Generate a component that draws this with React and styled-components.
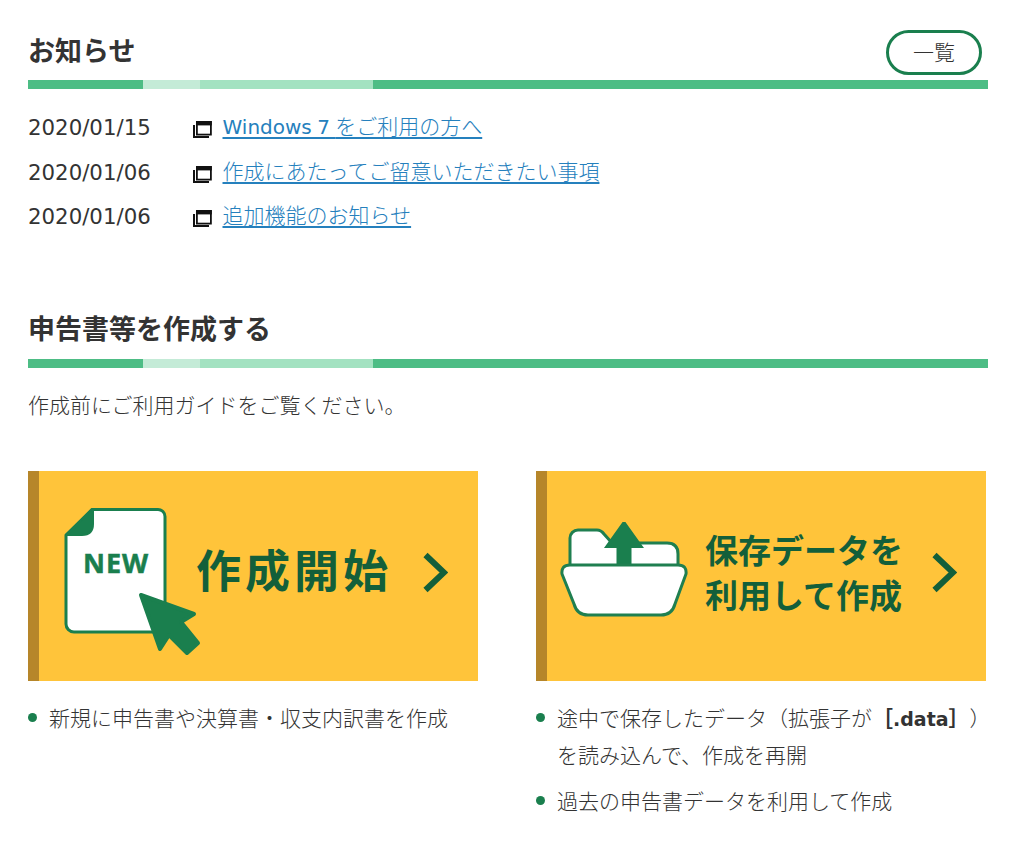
import React from "react";
import styled, { createGlobalStyle } from "styled-components";

const Global = createGlobalStyle`
  html, body { margin: 0; padding: 0; background: #fff; }
  body { font-family: "Noto Sans CJK JP", sans-serif; color: #333; }
`;

const Page = styled.div`
  width: 960px;
  padding: 29px 0 0 28px;
  box-sizing: content-box;
`;

const HeadRow = styled.div`
  display: flex;
  align-items: center;
  justify-content: space-between;
  height: 46px;
  padding-right: 6px;
`;

const Title = styled.h2`
  margin: -4px 0 0;
  font-size: 27px;
  line-height: 42px;
  font-weight: 700;
  color: #333;
`;

const ListButton = styled.a`
  display: flex;
  align-items: center;
  justify-content: center;
  box-sizing: border-box;
  width: 96px;
  height: 45px;
  padding-bottom: 2px;
  border: 3px solid #1a7f4e;
  border-radius: 23px;
  font-size: 21px;
  font-weight: 300;
  color: #333;
`;

const Bar = styled.div`
  display: flex;
  height: 9px;
  margin-top: 5px;
`;

const Seg = styled.span`
  display: block;
  width: ${(p) => p.$w};
  flex: ${(p) => (p.$w ? "none" : "1")};
  background: ${(p) => p.$c};
`;

const Rule = () => (
  <Bar>
    <Seg $w="115px" $c="#4dbd85" />
    <Seg $w="57px" $c="#c4ebd7" />
    <Seg $w="173px" $c="#a3e2c1" />
    <Seg $c="#4dbd85" />
  </Bar>
);

const News = styled.ul`
  list-style: none;
  margin: 16px 0 0;
  padding: 0;
`;

const NewsRow = styled.li`
  display: flex;
  align-items: center;
  height: 44.5px;
  font-size: 21px;
  font-weight: 300;
`;

const NewsDate = styled.span`
  width: 165px;
  flex: none;
  margin-top: 1px;
  font-family: "DejaVu Sans", sans-serif;
  font-size: 21.3px;
  font-weight: 400;
  color: #333;
`;

const NewsLink = styled.a`
  margin-left: 10.5px;
  margin-top: -4px;
  color: #2580bd;
  text-decoration: underline;
  text-underline-offset: 3px;
  text-decoration-thickness: 2px;
`;

const Latin = styled.span`
  font-family: "DejaVu Sans", sans-serif;
  font-weight: ${(p) => p.$weight};
  font-size: ${(p) => p.$size}px;
  line-height: 1;
  word-spacing: -1px;
`;

const WinSvg = styled.svg`
  width: 19px;
  height: 18px;
  flex: none;
  margin-top: 4px;
`;

const WindowIcon = () => (
  <WinSvg viewBox="0 0 19 18">
    <path d="M1 5v12h15" fill="none" stroke="#111" strokeWidth="2" />
    <rect x="3.900" y="2" width="14" height="12.600" fill="#fff" stroke="#111" strokeWidth="1.800" />
    <rect x="3" y="1" width="15.800" height="4.400" fill="#111" />
  </WinSvg>
);

const SecondTitle = styled(Title)`
  margin-top: 66px;
  height: 49px;
  line-height: 46px;
`;

const Intro = styled.p`
  margin: 20px 0 0;
  font-size: 21px;
  font-weight: 300;
  line-height: 32px;
  color: #333;
`;

const Cards = styled.div`
  display: grid;
  grid-template-columns: 450px 450px;
  column-gap: 58px;
  margin-top: 51px;
`;

const Card = styled.a`
  display: flex;
  align-items: center;
  box-sizing: border-box;
  height: 210px;
  border-left: 11px solid #b6862a;
  background: #ffc43a;
`;

const CardTitle = styled.span`
  font-weight: 700;
  color: #135f3a;
  flex: none;
  font-size: ${(p) => p.$size}px;
  letter-spacing: ${(p) => p.$track}px;
  line-height: ${(p) => p.$lh}px;
  margin-left: ${(p) => p.$ml}px;
  margin-bottom: ${(p) => p.$mb}px;
  white-space: pre-line;
`;

const Chevron = styled.svg`
  width: 28px;
  height: 42px;
  flex: none;
  margin-left: ${(p) => p.$ml}px;
  margin-bottom: 6px;
`;

const Arrow = ({ ml }) => (
  <Chevron $ml={ml} viewBox="0 0 28 42">
    <path d="M5.500 3 24 20.500 5.500 38" fill="none" stroke="#135f3a" strokeWidth="6" />
  </Chevron>
);

const NewSvg = styled.svg`
  width: 140px;
  height: 150px;
  flex: none;
  margin-left: 25px;
  margin-top: 12px;
`;

const NewLabel = styled.text`
  font-family: "Noto Sans", sans-serif;
  font-weight: 700;
  font-size: 27px;
  letter-spacing: 1px;
  fill: #1a7f4e;
  stroke: #1a7f4e;
  stroke-width: 0.5px;
`;

const FileNewIcon = () => (
  <NewSvg viewBox="0 0 140 150">
    <path
      d="M28 2.500H94a7 7 0 0 1 7 7V118a7 7 0 0 1-7 7H10a8 8 0 0 1-8-8V28Z"
      fill="#fff"
      stroke="#1a7f4e"
      strokeWidth="3"
      strokeLinejoin="round"
    />
    <path d="M28 2 3 28H18q11 0 11-11V2Z" fill="#1a7f4e" stroke="#1a7f4e" strokeWidth="2" strokeLinejoin="round" />
    <NewLabel x="19" y="66">NEW</NewLabel>
    <path
      d="M77 88 130 107 117 115 134 136 123 146 105 128 96 142Z"
      fill="#1a7f4e"
      stroke="#1a7f4e"
      strokeWidth="4"
      strokeLinejoin="round"
    />
  </NewSvg>
);

const FolderSvg = styled.svg`
  width: 128px;
  height: 98px;
  flex: none;
  margin-left: 13px;
  margin-bottom: 10px;
`;

const FolderIcon = () => (
  <FolderSvg viewBox="0 0 128 98">
    <path
      d="M10 44V16a8 8 0 0 1 8-8H37q4 0 7 4L52 21H107q11 0 11 11V44Z"
      fill="#fff"
      stroke="#1f7f50"
      strokeWidth="3"
    />
    <path d="M64 -2 84 26H71.500V44H56.500V26H44Z" fill="#1a7f4e" />
    <path
      d="M10 43H118q9 0 8 9L115 82q-3 11-14 11H28q-11 0-14-11L2 52q-1-9 8-9Z"
      fill="#fff"
      stroke="#1f7f50"
      strokeWidth="3"
    />
  </FolderSvg>
);

const Notes = styled.ul`
  list-style: none;
  margin: 18px -10px 0 0;
  padding: 0;
`;

const Note = styled.li`
  position: relative;
  padding-left: 21px;
  margin-bottom: 9px;
  font-size: 21px;
  font-weight: 300;
  line-height: 37px;
  color: #333;
  text-spacing-trim: space-all;
  &::before {
    content: "";
    position: absolute;
    left: 0;
    top: 14px;
    width: 9px;
    height: 9px;
    border-radius: 50%;
    background: #1a7f4e;
  }
`;

const Bold = styled.b`
  font-weight: 700;
`;

export default function App() {
  return (
    <Page>
      <Global />
      <HeadRow>
        <Title>お知らせ</Title>
        <ListButton>一覧</ListButton>
      </HeadRow>
      <Rule />
      <News>
        <NewsRow>
          <NewsDate>2020/01/15</NewsDate>
          <WindowIcon />
          <NewsLink><Latin $size={20} $weight={400}>Windows 7 </Latin>をご利用の方へ</NewsLink>
        </NewsRow>
        <NewsRow>
          <NewsDate>2020/01/06</NewsDate>
          <WindowIcon />
          <NewsLink>作成にあたってご留意いただきたい事項</NewsLink>
        </NewsRow>
        <NewsRow>
          <NewsDate>2020/01/06</NewsDate>
          <WindowIcon />
          <NewsLink>追加機能のお知らせ</NewsLink>
        </NewsRow>
      </News>
      <SecondTitle>申告書等を作成する</SecondTitle>
      <Rule />
      <Intro>作成前にご利用ガイドをご覧ください。</Intro>
      <Cards>
        <div>
          <Card>
            <FileNewIcon />
            <CardTitle $size={45} $track={4} $lh={60} $ml={-8} $mb={14}>作成開始</CardTitle>
            <Arrow ml={28} />
          </Card>
          <Notes>
            <Note>新規に申告書や決算書・収支内訳書を作成</Note>
          </Notes>
        </div>
        <div>
          <Card>
            <FolderIcon />
            <CardTitle $size={33} $track={0} $lh={45} $ml={17} $mb={8}>{"保存データを\n利用して作成"}</CardTitle>
            <Arrow ml={26} />
          </Card>
          <Notes>
            <Note>途中で保存したデータ（拡張子が<Bold>［<Latin $size={19} $weight={700}>.data</Latin>］</Bold>）を読み込んで、作成を再開</Note>
            <Note>過去の申告書データを利用して作成</Note>
          </Notes>
        </div>
      </Cards>
    </Page>
  );
}
